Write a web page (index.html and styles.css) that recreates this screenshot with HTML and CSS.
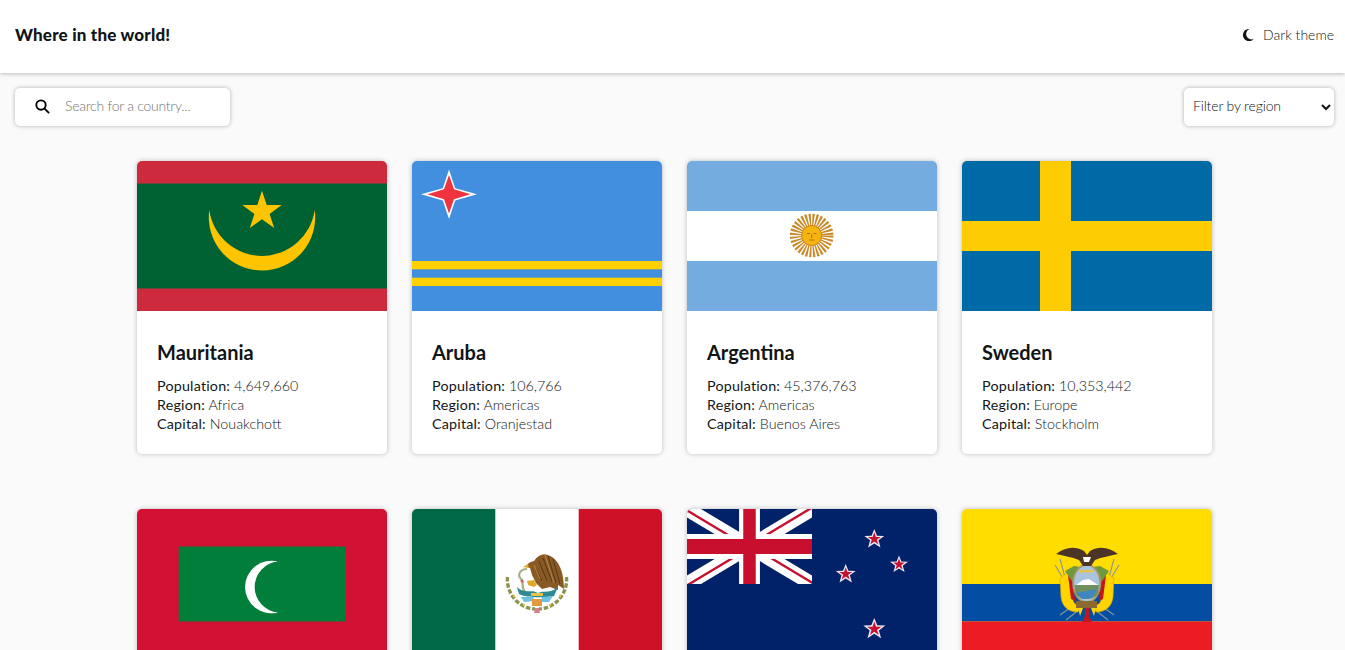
FILE: index.html
```html
<!DOCTYPE html>
<html lang="en">
<head>
    <meta charset="UTF-8">
    <meta name="viewport" content="width=device-width, initial-scale=1.0">
    <title>Where in the world!</title>
    <link rel="stylesheet" href="styles.css">
</head>
<body>
    <header class="header">
        <h1 class="header-title">Where in the world!</h1>
        <button class="theme-toggle" type="button">
            <svg class="moon-icon" viewBox="0 0 12 12"><path d="M7.4 0A6.1 6.1 0 1 0 11.8 9.9 5.4 5.4 0 0 1 7.4 0Z"/></svg>
            Dark theme
        </button>
    </header>

    <div class="toolbar">
        <label class="search">
            <svg class="search-icon" viewBox="0 0 16 16"><circle cx="6.4" cy="6.4" r="5"/><path d="M10 10l5 5"/></svg>
            <input class="search-input" type="text" placeholder="Search for a country...">
        </label>
        <select class="region-filter">
            <option>Filter by region</option>
            <option>Africa</option>
            <option>Americas</option>
            <option>Asia</option>
            <option>Europe</option>
            <option>Oceania</option>
        </select>
    </div>

    <main class="countries">
        <article class="card">
            <svg class="flag" viewBox="0 0 250 150">
                <rect width="250" height="150" fill="#cd2a3e"/>
                <rect y="22.5" width="250" height="105" fill="#006233"/>
                <path fill="#ffc400" d="M72.3 49A53.2 53.2 0 1 0 177.7 49 53.2 53.2 0 0 1 72.3 49Z"/>
                <polygon fill="#ffc400" points="125,29.7 129.7,44 144.7,44 132.6,52.9 137.2,67 125,58.3 112.8,67 117.4,52.9 105.3,44 120.3,44"/>
            </svg>
            <div class="card-body">
                <h2 class="card-name">Mauritania</h2>
                <p class="card-line"><span class="card-label">Population:</span> 4,649,660</p>
                <p class="card-line"><span class="card-label">Region:</span> Africa</p>
                <p class="card-line"><span class="card-label">Capital:</span> Nouakchott</p>
            </div>
        </article>

        <article class="card">
            <svg class="flag" viewBox="0 0 250 150">
                <rect width="250" height="150" fill="#418fde"/>
                <rect y="100" width="250" height="8.3" fill="#ffd100"/>
                <rect y="116.7" width="250" height="8.3" fill="#ffd100"/>
                <polygon fill="#fff" points="37,8.5 43.2,27.2 65,33.3 43.2,39.4 37,58 30.8,39.4 9,33.3 30.8,27.2"/>
                <polygon fill="#ef3340" points="37,14 42,28.3 58.5,33.3 42,38.3 37,52.5 32,38.3 15.5,33.3 32,28.3"/>
            </svg>
            <div class="card-body">
                <h2 class="card-name">Aruba</h2>
                <p class="card-line"><span class="card-label">Population:</span> 106,766</p>
                <p class="card-line"><span class="card-label">Region:</span> Americas</p>
                <p class="card-line"><span class="card-label">Capital:</span> Oranjestad</p>
            </div>
        </article>

        <article class="card">
            <svg class="flag" viewBox="0 0 250 150">
                <rect width="250" height="150" fill="#74acdf"/>
                <rect y="50" width="250" height="50" fill="#fff"/>
                <!-- rays: a wide dashed ring -->
                <circle cx="124.7" cy="74.5" r="15" fill="none" stroke="#c98a2a" stroke-width="13.5" stroke-dasharray="1.7 1.25"/>
                <circle cx="124.7" cy="74.5" r="10" fill="#f6b40e" stroke="#c9801a" stroke-width="1"/>
                <path fill="none" stroke="#b5701c" stroke-width="1" d="M120 72.5h3M126.5 72.5h3M124.7 73v4M122 79h5.4"/>
            </svg>
            <div class="card-body">
                <h2 class="card-name">Argentina</h2>
                <p class="card-line"><span class="card-label">Population:</span> 45,376,763</p>
                <p class="card-line"><span class="card-label">Region:</span> Americas</p>
                <p class="card-line"><span class="card-label">Capital:</span> Buenos Aires</p>
            </div>
        </article>

        <article class="card">
            <svg class="flag" viewBox="0 0 250 150">
                <rect width="250" height="150" fill="#006aa7"/>
                <rect x="78" width="31" height="150" fill="#fecc02"/>
                <rect y="60" width="250" height="30" fill="#fecc02"/>
            </svg>
            <div class="card-body">
                <h2 class="card-name">Sweden</h2>
                <p class="card-line"><span class="card-label">Population:</span> 10,353,442</p>
                <p class="card-line"><span class="card-label">Region:</span> Europe</p>
                <p class="card-line"><span class="card-label">Capital:</span> Stockholm</p>
            </div>
        </article>

        <!-- second row: only the flags are inside the window -->
        <article class="card">
            <svg class="flag" viewBox="0 0 250 150">
                <rect width="250" height="150" fill="#d21034"/>
                <rect x="41.7" y="37.5" width="166.6" height="75" fill="#007e3a"/>
                <path fill="#fff" d="M141 52.5A26.35 26.35 0 1 0 141 103.5 25.6 25.6 0 0 1 141 52.5Z"/>
            </svg>
        </article>

        <article class="card">
            <svg class="flag" viewBox="0 0 250 150">
                <rect width="250" height="150" fill="#fff"/>
                <rect width="83.3" height="150" fill="#006847"/>
                <rect x="166.7" width="83.3" height="150" fill="#ce1126"/>
                <!-- eagle -->
                <path fill="#8a5a25" d="M114 58C117 52 120 53 122 52 126 46 131 44 136 46 145 49 152 60 152 80L146 76 146 81 138 78 130 80 124 74 120 66 118 59Z"/>
                <path fill="none" stroke="#4f3210" stroke-width=".9" d="M131 49l9 24M136 47l8 27M141 50l7 25M127 52l8 20M124 60l6 12"/>
                <path fill="none" stroke="#c49a5a" stroke-width=".7" d="M122 56l6 14M133 46l9 28"/>
                <path fill="#e0a92a" d="M111 58l5-3 1 4ZM115 72l7-1 3 5-3 2-6-2Z"/>
                <!-- snake -->
                <path fill="none" stroke="#a9b08c" stroke-width="2.2" d="M115 60C108 60 105 66 109 70 113 73 108 77 113 83"/>
                <!-- cactus and water -->
                <path fill="#2c8a95" d="M105 78C111 85 120 80 126 84 132 81 138 85 146 78L142 87C132 89 114 89 107 85Z"/>
                <path fill="#6cc1e0" d="M109 88l12 0 2 4-11 1ZM130 88l11-1-4 6-8 0Z"/>
                <path fill="#e8c24a" d="M119 84h12v3h-12Z"/>
                <rect x="120" y="90" width="10" height="7" fill="#e39a3c"/>
                <!-- wreath -->
                <path fill="none" stroke="#87964f" stroke-width="3.4" stroke-dasharray="4.5 1.8" d="M95.5 68C94 84 106 99 123 100"/>
                <path fill="none" stroke="#87964f" stroke-width="3.4" stroke-dasharray="4.5 1.8" d="M154.5 68C156 84 144 99 127 100"/>
                <path fill="#d9808c" d="M123 99h4l1 5h-6Z"/>
                <circle cx="110" cy="72" r="1.5" fill="#e05a5a"/>
                <circle cx="102" cy="87" r="1.2" fill="#e8c24a"/>
                <circle cx="112" cy="96" r="1.2" fill="#e8c24a"/>
                <circle cx="148" cy="87" r="1.2" fill="#e8c24a"/>
                <circle cx="138" cy="96" r="1.2" fill="#e8c24a"/>
            </svg>
        </article>

        <article class="card">
            <svg class="flag" viewBox="0 0 250 150">
                <defs>
                    <clipPath id="jack-clip"><path d="M0 0v30h60V0Z"/></clipPath>
                    <clipPath id="jack-tri"><path d="M30 15h30v15ZV30H0ZH0V0ZV0h30Z"/></clipPath>
                    <g id="nz-star">
                        <polygon fill="#e8e8f0" points="0,-1 .27,-.33 1,-.31 .42,.13 .62,.84 0,.44 -.62,.84 -.42,.13 -1,-.31 -.27,-.33"/>
                        <polygon fill="#c8102e" transform="scale(.68)" points="0,-1 .24,-.31 .95,-.31 .37,.12 .59,.81 0,.38 -.59,.81 -.37,.12 -.95,-.31 -.24,-.31"/>
                    </g>
                </defs>
                <rect width="250" height="150" fill="#012169"/>
                <svg width="125" height="75" viewBox="0 0 60 30" preserveAspectRatio="none">
                    <g clip-path="url(#jack-clip)">
                        <path stroke="#fff" stroke-width="6" d="M0 0L60 30M60 0L0 30"/>
                        <path stroke="#c8102e" stroke-width="2" clip-path="url(#jack-tri)" d="M0 0L60 30M60 0L0 30"/>
                        <path stroke="#fff" stroke-width="10" d="M30 0V30M0 15H60"/>
                        <path stroke="#c8102e" stroke-width="6" d="M30 0V30M0 15H60"/>
                    </g>
                </svg>
                <use href="#nz-star" transform="translate(187.3 30) scale(10)"/>
                <use href="#nz-star" transform="translate(212 55.5) scale(9)"/>
                <use href="#nz-star" transform="translate(158.7 65) scale(10)"/>
                <use href="#nz-star" transform="translate(187.3 120) scale(11)"/>
            </svg>
        </article>

        <article class="card">
            <svg class="flag" viewBox="0 0 250 150">
                <rect width="250" height="150" fill="#ffdd00"/>
                <rect y="75" width="250" height="37.5" fill="#034ea2"/>
                <rect y="112.5" width="250" height="37.5" fill="#ed1c24"/>
                <!-- spears behind the flags -->
                <path fill="none" stroke="#8f9490" stroke-width="1.1" d="M93 56l12 20M157 56l-12 20M98 50l6 22M152 50l-6 22M98 106l14-10M152 106l-14-10M104 111l14-11M146 111l-14-11"/>
                <!-- side flags -->
                <path fill="#ffd400" stroke="#d8a800" stroke-width=".6" d="M98 69L108 62 111 90C111 94 114 96 118 97L116 103C106 103 100 97 99 88Z"/>
                <path fill="#ffd400" stroke="#d8a800" stroke-width=".6" d="M152 69L142 62 139 90C139 94 136 96 132 97L134 103C144 103 150 97 151 88Z"/>
                <path fill="#c4161c" d="M106 66L110 62 113 92 109 90Z"/>
                <path fill="#c4161c" d="M144 66L140 62 137 92 141 90Z"/>
                <path fill="#6f9a3c" d="M103 62l9-5 7 1-2 11-5 6ZM147 62l-9-5-7 1 2 11 5 6Z"/>
                <!-- oval -->
                <ellipse cx="124.7" cy="74.5" rx="14.5" ry="19.5" fill="#a8966a"/>
                <ellipse cx="124.7" cy="74.5" rx="12.7" ry="17.7" fill="#a9c4dc"/>
                <path fill="#6f8f5c" d="M112.5 76H137L136 84C132 92 117 92 113.500 84Z"/>
                <path fill="#fff" d="M114 76L121 71 127 70 136 76Z"/>
                <path fill="#3f86c0" d="M114 84l21-4-5 9-10 1Z"/>
                <path fill="#e8c24a" d="M117 61h15v2.500h-15Z"/>
                <!-- base -->
                <rect x="114" y="92" width="21" height="7" fill="#8c6a2f"/>
                <path fill="#ffd400" d="M116 99l5 0-3 8ZM134 99l-5 0 3 8Z"/>
                <path fill="#c4161c" d="M123 99h4v8l3 6h-10l3-6Z"/>
                <!-- condor -->
                <path fill="#4a3526" d="M94 45C102 39 112 36 122 42L125 46 128 42C138 36 148 39 156 45 148 47 140 48 133 51L129 57H121L117 51C110 48 102 47 94 45Z"/>
                <path fill="#fff" d="M121 48h8l-2 5h-5Z"/>
            </svg>
        </article>
    </main>
</body>
</html>
```

FILE: styles.css
```css
* {
    box-sizing: border-box;
}

html,
body {
    height: 100%;
    overflow: hidden;
}

body {
    margin: 0;
    font-family: "Lato", "Noto Sans", sans-serif;
    font-size: 14px;
    color: #111517;
    background-color: #fafafa;
}

.header {
    display: flex;
    justify-content: space-between;
    align-items: center;
    height: 73px;
    padding: 0 11px 5px 15px;
    background-color: #fff;
    box-shadow: 0 1px 4px rgba(0, 0, 0, 0.25);
}

.header-title {
    margin: 0;
    font-size: 17px;
    letter-spacing: 0.2px;
    font-weight: 900;
}

.theme-toggle {
    display: flex;
    align-items: center;
    gap: 9px;
    padding: 0;
    border: none;
    background: none;
    font: inherit;
    font-weight: 300;
    color: #111517;
}

.moon-icon {
    width: 12px;
    height: 12px;
    margin-top: 2px;
    fill: #111517;
}

.toolbar {
    display: flex;
    justify-content: space-between;
    padding: 15px 11px 0 15px;
}

.search {
    display: flex;
    align-items: center;
    gap: 15px;
    width: 215px;
    height: 38px;
    padding: 0 0 1px 20px;
    background-color: #fff;
    border-radius: 5px;
    box-shadow: 0 0 4px rgba(0, 0, 0, 0.3);
}

.search-icon {
    flex: none;
    width: 15px;
    height: 15px;
    fill: none;
    stroke: #000;
    stroke-width: 2;
}

.search-input {
    width: 150px;
    padding: 0 0 3px;
    border: none;
    outline: none;
    font: inherit;
    font-weight: 300;
    letter-spacing: -0.25px;
}

.search-input::placeholder {
    color: #757575;
}

.region-filter {
    width: 150px;
    height: 38px;
    padding: 0 0 3px 5px;
    border: none;
    border-radius: 5px;
    background-color: #fff;
    box-shadow: 0 0 4px rgba(0, 0, 0, 0.3);
    font: inherit;
    font-weight: 300;
    letter-spacing: -0.15px;
    color: #111517;
}

.countries {
    display: grid;
    grid-template-columns: repeat(4, 250px);
    gap: 55px 25px;
    padding: 35px 0 0 137px;
}

.card {
    background-color: #fff;
    border-radius: 5px;
    overflow: hidden;
    box-shadow: 0 0 5px rgba(0, 0, 0, 0.25);
}

.flag {
    display: block;
    width: 250px;
    height: 150px;
}

.card-body {
    padding: 28px 20px 21px;
}

.card-name {
    margin: 0 0 10px;
    font-size: 20px;
    line-height: 27px;
    font-weight: 700;
}

.card-line {
    margin: 0;
    font-size: 14.3px;
    line-height: 19px;
    font-weight: 300;
}

.card-label {
    font-weight: 400;
    letter-spacing: 0.2px;
}
```
